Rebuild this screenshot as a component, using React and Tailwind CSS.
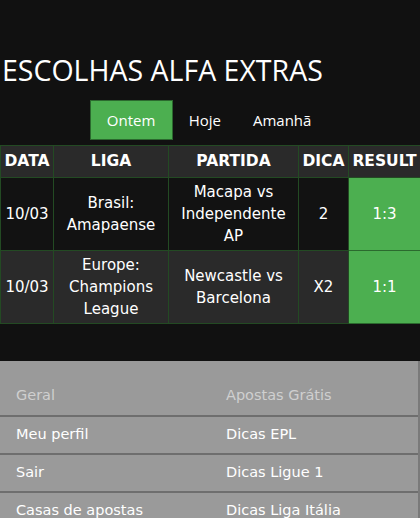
const rows = [
  { date: '10/03', league: ['Brasil:', 'Amapaense'], match: ['Macapa vs', 'Independente', 'AP'], tip: '2', result: '1:3', bg: 'bg-[#121212]' },
  { date: '10/03', league: ['Europe:', 'Champions', 'League'], match: ['Newcastle vs', 'Barcelona'], tip: 'X2', result: '1:1', bg: 'bg-[#2a2a2a]' },
]

const links = [
  ['Meu perfil', 'Dicas EPL'],
  ['Sair', 'Dicas Ligue 1'],
  ['Casas de apostas', 'Dicas Liga Itália'],
]

export default function App() {
  return (
    <div className="h-[518px] w-[420px] overflow-hidden bg-[#111111] text-white">
      <div className="pt-[50px]">
        <h1 className="pl-[2px] text-[28.5px] leading-[40px] font-['Open_Sans',sans-serif]">ESCOLHAS ALFA EXTRAS</h1>
      </div>

      <nav className="mt-[10px] flex justify-center font-['Open_Sans',sans-serif] text-[15px]">
        <div className="ml-[-3px] flex items-center">
          <button className="h-[40px] w-[83px] border border-[#2b6a2e] bg-[#4caf50] text-white">Ontem</button>
          <button className="h-[40px] px-[16px] text-white">Hoje</button>
          <button className="h-[40px] px-[16px] text-white">Amanhã</button>
        </div>
      </nav>

      <table className="mt-[5px] w-[420px] table-fixed border-collapse text-center font-['DejaVu_Sans',Tahoma,sans-serif] text-[15px]">
        <colgroup>
          <col className="w-[53px]" />
          <col className="w-[115px]" />
          <col className="w-[130px]" />
          <col className="w-[50px]" />
          <col className="w-[72px]" />
        </colgroup>
        <thead>
          <tr className="h-[32px] bg-[#2a2a2a] text-[15.5px] font-bold">
            {['DATA', 'LIGA', 'PARTIDA', 'DICA', 'RESULT'].map((h) => (
              <th key={h} className="overflow-hidden border border-[#234a23] px-0 whitespace-nowrap">{h}</th>
            ))}
          </tr>
        </thead>
        <tbody>
          {rows.map((r, i) => (
            <tr key={i} className={`${r.bg} h-[73px] leading-[22px]`}>
              <td className="border border-[#234a23]">{r.date}</td>
              <td className="border border-[#234a23]">
                {r.league.map((l) => <div key={l}>{l}</div>)}
              </td>
              <td className="border border-[#234a23]">
                {r.match.map((l) => <div key={l}>{l}</div>)}
              </td>
              <td className="border border-[#234a23]">{r.tip}</td>
              <td className="border border-[#2b6a2e] bg-[#4caf50]">{r.result}</td>
            </tr>
          ))}
        </tbody>
      </table>

      <footer className="mt-[37px] border-r-2 border-[#7a7a7a] bg-[#9a9a9a] pt-[21px] font-['DejaVu_Sans',Tahoma,sans-serif] text-[14.5px]">
        <div className="grid grid-cols-[210px_1fr] border-b-2 border-[#6e6e6e] pb-[7px] text-[#cfcfcf]">
          <div className="pl-[16px] leading-[26px]">Geral</div>
          <div className="pl-[16px] leading-[26px]">Apostas Grátis</div>
        </div>
        {links.map(([a, b]) => (
          <div key={a} className="grid h-[38px] grid-cols-[210px_1fr] items-center border-b-2 border-[#6e6e6e] text-white">
            <div className="pl-[16px]">{a}</div>
            <div className="pl-[16px]">{b}</div>
          </div>
        ))}
      </footer>
    </div>
  )
}
